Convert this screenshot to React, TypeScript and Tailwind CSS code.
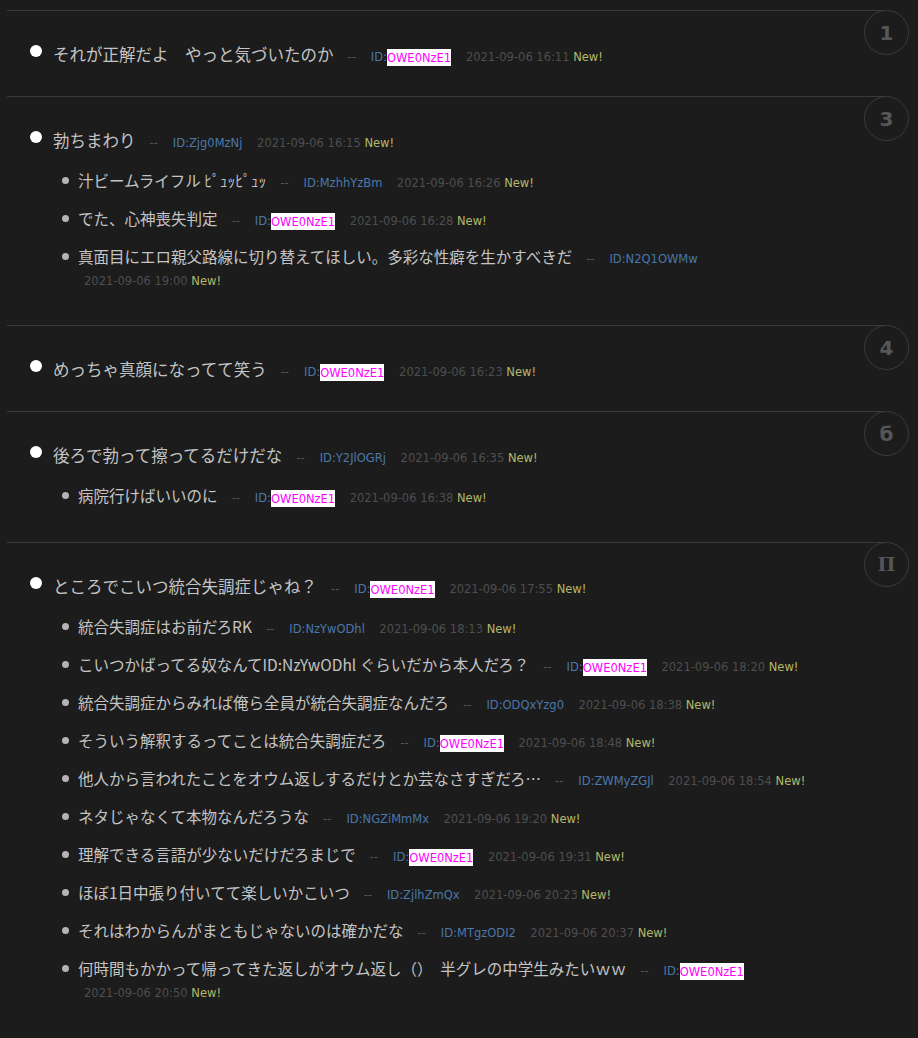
import React from 'react';

type Reply = {
  text: string;
  id: string;
  time: string;
};

type Thread = {
  no: string;
  noFont?: string;
  post: Reply;
  replies: Reply[];
};

// the id that gets highlighted (thread author)
const OWNER = 'OWE0NzE1';

const threads: Thread[] = [
  {
    no: '1',
    post: { text: 'それが正解だよ　やっと気づいたのか', id: 'OWE0NzE1', time: '2021-09-06 16:11' },
    replies: [],
  },
  {
    no: '3',
    post: { text: '勃ちまわり', id: 'Zjg0MzNj', time: '2021-09-06 16:15' },
    replies: [
      { text: '汁ビームライフル ﾋﾟｭｯﾋﾟｭｯ', id: 'MzhhYzBm', time: '2021-09-06 16:26' },
      { text: 'でた、心神喪失判定', id: 'OWE0NzE1', time: '2021-09-06 16:28' },
      { text: '真面目にエロ親父路線に切り替えてほしい。多彩な性癖を生かすべきだ', id: 'N2Q1OWMw', time: '2021-09-06 19:00' },
    ],
  },
  {
    no: '4',
    post: { text: 'めっちゃ真顔になってて笑う', id: 'OWE0NzE1', time: '2021-09-06 16:23' },
    replies: [],
  },
  {
    no: 'б',
    post: { text: '後ろで勃って擦ってるだけだな', id: 'Y2JlOGRj', time: '2021-09-06 16:35' },
    replies: [{ text: '病院行けばいいのに', id: 'OWE0NzE1', time: '2021-09-06 16:38' }],
  },
  {
    no: 'Π',
    noFont: 'serif',
    post: { text: 'ところでこいつ統合失調症じゃね？', id: 'OWE0NzE1', time: '2021-09-06 17:55' },
    replies: [
      { text: '統合失調症はお前だろRK', id: 'NzYwODhl', time: '2021-09-06 18:13' },
      { text: 'こいつかばってる奴なんてID:NzYwODhl ぐらいだから本人だろ？', id: 'OWE0NzE1', time: '2021-09-06 18:20' },
      { text: '統合失調症からみれば俺ら全員が統合失調症なんだろ', id: 'ODQxYzg0', time: '2021-09-06 18:38' },
      { text: 'そういう解釈するってことは統合失調症だろ', id: 'OWE0NzE1', time: '2021-09-06 18:48' },
      { text: '他人から言われたことをオウム返しするだけとか芸なさすぎだろ…', id: 'ZWMyZGJl', time: '2021-09-06 18:54' },
      { text: 'ネタじゃなくて本物なんだろうな', id: 'NGZiMmMx', time: '2021-09-06 19:20' },
      { text: '理解できる言語が少ないだけだろまじで', id: 'OWE0NzE1', time: '2021-09-06 19:31' },
      { text: 'ほぼ1日中張り付いてて楽しいかこいつ', id: 'ZjlhZmQx', time: '2021-09-06 20:23' },
      { text: 'それはわからんがまともじゃないのは確かだな', id: 'MTgzODI2', time: '2021-09-06 20:37' },
      { text: '何時間もかかって帰ってきた返しがオウム返し（）　半グレの中学生みたいｗｗ', id: 'OWE0NzE1', time: '2021-09-06 20:50' },
    ],
  },
];

function Meta({ id, time }: { id: string; time: string }) {
  return (
    <>
      <span className="ml-[14px] font-['DejaVu_Sans',sans-serif] text-[11.5px] leading-[14px] text-[#555]">--</span>
      <span className="ml-[15px] mr-[5px] font-['DejaVu_Sans',sans-serif] text-[11.5px] leading-[14px] text-[#4a78aa]">
        ID:
        {id === OWNER ? (
          <span className="bg-white py-[1.5px] text-[#ff00ff]">{id}</span>
        ) : (
          id
        )}
      </span>{' '}
      <span className="ml-[6px] inline-block whitespace-nowrap font-['DejaVu_Sans',sans-serif] text-[11.5px] leading-[14px]">
        <span className="text-[#4e4e4e]">{time}</span> <span className="text-[#b4b86a]">New!</span>
      </span>
    </>
  );
}

function ThreadBlock({ thread }: { thread: Thread }) {
  return (
    <section className="relative ml-[7px] mr-[32px] border-t border-[#3a3a3a] pt-[31px] pb-[30px] pr-[60px]">
      <div className="absolute -top-px -right-[23px] flex h-[45px] w-[45px] items-center justify-center rounded-full border border-[#3a3a3a]">
        <span
          className={
            thread.noFont === 'serif'
              ? "font-['DejaVu_Serif',serif] text-[19px] font-bold text-[#575757]"
              : "font-['DejaVu_Sans',sans-serif] text-[20px] font-bold text-[#575757]"
          }
        >
          {thread.no}
        </span>
      </div>

      <div className="flex pl-[23px] text-[16.5px] leading-[24px] text-[#c4c4c4]">
        <span className="mt-[3px] mr-[11px] h-3 w-3 shrink-0 rounded-full bg-white" />
        <div className="min-w-0 flex-1">
          <div>
            {thread.post.text}
            <Meta id={thread.post.id} time={thread.post.time} />
          </div>

          {thread.replies.length > 0 && (
            <ul className="mt-[17px] mb-[6px] flex flex-col gap-[16px] pl-[9px] text-[15.5px] leading-[22px]">
              {thread.replies.map((r, i) => (
                <li key={i} className="flex">
                  <span className="mt-[8px] mr-[9px] h-[7px] w-[7px] shrink-0 rounded-full bg-[#b4b4b4]" />
                  <div className="min-w-0 flex-1">
                    {r.text}
                    <Meta id={r.id} time={r.time} />
                  </div>
                </li>
              ))}
            </ul>
          )}
        </div>
      </div>
    </section>
  );
}

export default function App() {
  return (
    <div className="min-h-[1038px] bg-[#1c1c1c] pt-[10px] font-['Noto_Sans_CJK_JP',sans-serif]">
      {threads.map((t) => (
        <ThreadBlock key={t.no} thread={t} />
      ))}
    </div>
  );
}
